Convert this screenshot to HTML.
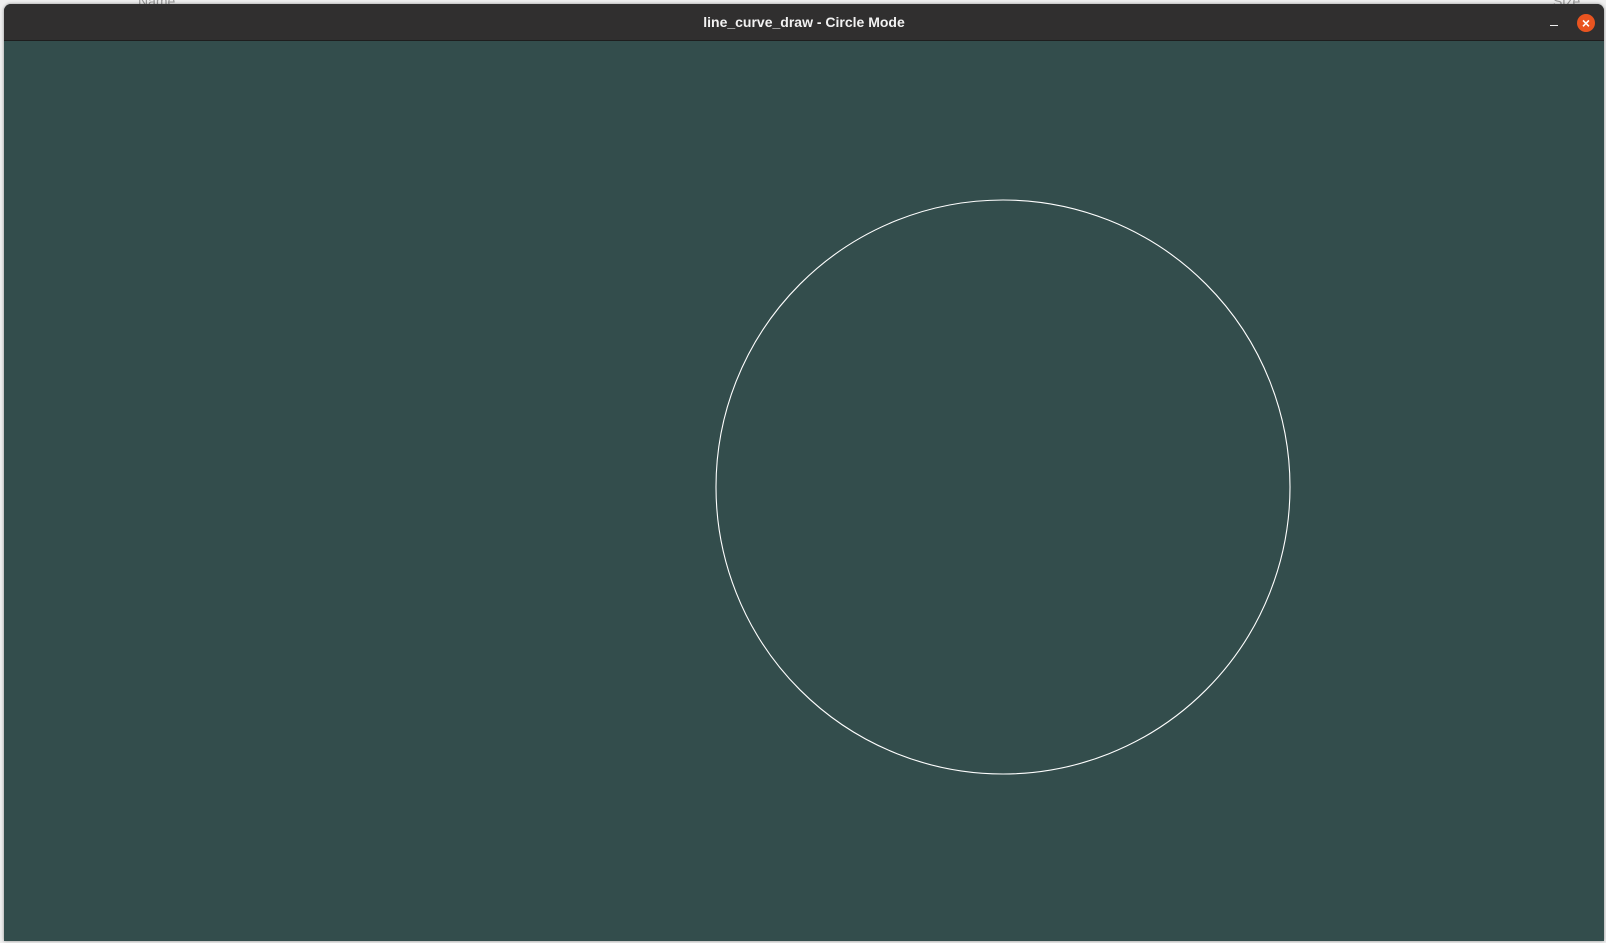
<!DOCTYPE html>
<html><head><style>
html,body{margin:0;padding:0;width:1606px;height:943px;overflow:hidden;background:#efefef;font-family:"Liberation Sans",sans-serif;}
.bgname{position:absolute;left:138px;top:-7px;color:#999;font-size:14px;}
.bgsize{position:absolute;left:1553px;top:-7px;color:#999;font-size:14px;}
.win{position:absolute;left:4px;top:4px;width:1600px;height:937px;background:#334d4c;border-radius:7px 7px 0 0;overflow:hidden;box-shadow:0 0 3px rgba(0,0,0,.4);}
.tb{position:absolute;left:0;top:0;width:100%;height:36px;background:#302f2f;border-bottom:1px solid #1e1e1e;}
.title{position:absolute;left:0;right:0;top:10px;text-align:center;color:#f2f2f2;font-weight:bold;font-size:14px;}
.min{position:absolute;left:1546px;top:21px;width:8px;height:1px;background:#eee;}
.close{position:absolute;left:1573px;top:10px;width:18px;height:18px;border-radius:50%;background:#e95420;color:#fff;font-size:14px;line-height:18px;text-align:center;font-weight:bold;}
svg{position:absolute;left:0;top:0;}
</style></head><body>
<div class="bgname">Name</div><div class="bgsize">Size</div>
<div class="win">
<div class="tb"><div class="title">line_curve_draw - Circle Mode</div><div class="min"></div><div class="close">×</div></div>
</div>
<svg width="1606" height="943"><circle cx="1003" cy="487" r="287" fill="none" stroke="#fff" stroke-width="1.1"/></svg>
</body></html>
